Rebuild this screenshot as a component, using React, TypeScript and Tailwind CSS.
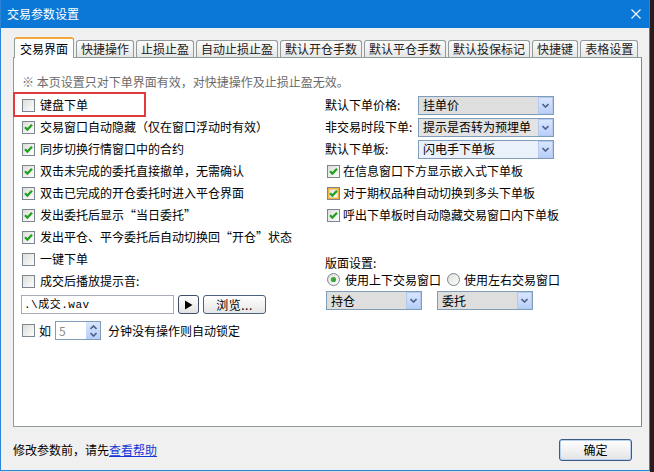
import React from 'react';

function CheckBox({ checked = false, hot = false }: { checked?: boolean; hot?: boolean }) {
  return (
    <svg width="13" height="13" viewBox="0 0 13 13" className="shrink-0">
      <defs>
        <linearGradient id="cb-fill" x1="0" y1="0" x2="1" y2="1">
          <stop offset="0" stopColor="#dcdcd7" />
          <stop offset="1" stopColor="#ffffff" />
        </linearGradient>
      </defs>
      <rect x="0.5" y="0.5" width="12" height="12" fill="url(#cb-fill)" stroke="#7b8691" />
      {hot && <rect x="1.75" y="1.75" width="9.5" height="9.5" fill="none" stroke="#f5b43c" strokeWidth="1.5" />}
      {checked && <path d="M3 6.2 L5.4 8.6 L10 3.8" fill="none" stroke="#21a121" strokeWidth="2.2" />}
    </svg>
  );
}

function Radio({ on = false }: { on?: boolean }) {
  return (
    <svg width="13" height="13" viewBox="0 0 13 13" className="shrink-0">
      <defs>
        <linearGradient id="rb-fill" x1="0" y1="0" x2="1" y2="1">
          <stop offset="0" stopColor="#dcdcd7" />
          <stop offset="1" stopColor="#ffffff" />
        </linearGradient>
      </defs>
      <circle cx="6.5" cy="6.5" r="6" fill="url(#rb-fill)" stroke="#7b8691" />
      {on && <circle cx="6.5" cy="6.5" r="2.6" fill="#3aa53a" />}
    </svg>
  );
}

function Chevron({ up = false }: { up?: boolean }) {
  return (
    <svg width="7" height="5" viewBox="0 0 7 5">
      <path d={up ? 'M0.5 4 L3.5 1 L6.5 4' : 'M0.5 1 L3.5 4 L6.5 1'} fill="none" stroke="#4d6185" strokeWidth="1.6" />
    </svg>
  );
}

function Combo({ text, width, fill }: { text: string; width: string; fill: string }) {
  return (
    <div className={`flex h-[19px] border border-[#7f9db9] bg-white ${width}`}>
      <div className={`flex flex-1 items-center overflow-hidden whitespace-nowrap pl-[4px] ${fill}`}>{text}</div>
      <div className="flex w-[15px] items-center justify-center border border-[#b4c8f0] bg-gradient-to-b from-[#d9e5fd] to-[#b9cffa]">
        <Chevron />
      </div>
    </div>
  );
}

function Check({ label, checked = false, hot = false, gap = 'gap-[5px]' }: { label: string; checked?: boolean; hot?: boolean; gap?: string }) {
  return (
    <div className={`flex h-[22px] items-center ${gap}`}>
      <CheckBox checked={checked} hot={hot} />
      <span className="whitespace-nowrap">{label}</span>
    </div>
  );
}

const tabs = ['交易界面', '快捷操作', '止损止盈', '自动止损止盈', '默认开仓手数', '默认平仓手数', '默认投保标记', '快捷键', '表格设置'];

export default function App() {
  return (
    <div className="flex h-[472px] w-[654px] bg-[#d8d8d8] font-[family-name:'Noto_Sans_CJK_SC','Noto_Sans',sans-serif] text-[12px] leading-[16px] text-black">
      <div className="flex h-[471px] w-[650px] flex-col border-x border-b border-[#2c84d6] bg-[#f0f0f0]">
        {/* 标题栏 */}
        <div className="flex h-[28px] items-center justify-between bg-[#0b78d7] pl-[6px] pr-[8px] text-white">
          <span>交易参数设置</span>
          <svg width="10" height="10" viewBox="0 0 10 10">
            <path d="M0.5 0.5 L9.5 9.5 M9.5 0.5 L0.5 9.5" stroke="#ffffff" strokeWidth="1.1" />
          </svg>
        </div>

        <div className="flex flex-col pl-[12px] pr-[7px] pt-[9px]">
          {/* 选项卡 */}
          <div className="flex h-[20px] items-end gap-[2px] pl-[1px]">
            {tabs.map((t, i) =>
              i === 0 ? (
                <div
                  key={t}
                  className="relative z-10 -mb-px flex h-[21px] items-center rounded-t-[3px] border-x border-t-2 border-x-[#919b9c] border-t-[#f0a83a] bg-white px-[5px] leading-[14px]"
                >
                  {t}
                </div>
              ) : (
                <div
                  key={t}
                  className="flex h-[17px] items-center rounded-t-[3px] border-x border-t border-[#919b9c] bg-gradient-to-b from-[#fcfcfc] to-[#e6e6e6] px-[4px] leading-[14px] text-[#222]"
                >
                  {t}
                </div>
              )
            )}
          </div>

          {/* 面板 */}
          <div className="relative h-[370px] border border-[#919b9c] border-r-[#7f8586] bg-white pl-[8px] pt-[16px]">
            <div className="h-[16px] whitespace-nowrap text-[#6b6b6b]">※ 本页设置只对下单界面有效，对快捷操作及止损止盈无效。</div>

            <div className="mt-[4px] flex">
              <div className="flex w-[303px] flex-col">
                <Check label="键盘下单" />
                <Check label="交易窗口自动隐藏（仅在窗口浮动时有效）" checked />
                <Check label="同步切换行情窗口中的合约" checked />
                <Check label="双击未完成的委托直接撤单，无需确认" checked />
                <Check label="双击已完成的开仓委托时进入平仓界面" checked />
                <Check label="发出委托后显示“当日委托”" checked />
                <Check label="发出平仓、平今委托后自动切换回“开仓”状态" checked />
                <Check label="一键下单" />
                <Check label="成交后播放提示音:" />

                <div className="-ml-px mt-[3px] flex h-[19px] items-stretch">
                  <div className="flex w-[153px] items-center border border-[#a5acb5] bg-white pl-[2px] font-[family-name:'Liberation_Mono','Noto_Sans_CJK_SC',monospace] text-[11px] tracking-[0.5px]">
                    .\成交.wav
                  </div>
                  <div className="ml-[4px] flex w-[21px] items-center justify-center rounded-[3px] border border-[#3c4f6b] bg-gradient-to-b from-[#ffffff] to-[#e3e3e3]">
                    <svg width="9" height="10" viewBox="0 0 9 10">
                      <path d="M1 0.5 L8.5 5 L1 9.5 Z" fill="#000" />
                    </svg>
                  </div>
                  <div className="ml-[4px] flex w-[63px] items-center justify-center rounded-[3px] border border-[#4b5f7e] bg-gradient-to-b from-[#ffffff] to-[#e6e6e6] tracking-[0.5px]">
                    浏览...
                  </div>
                </div>

                <div className="mt-[7px] flex h-[19px] items-center">
                  <CheckBox />
                  <span className="ml-[4px]">如</span>
                  <div className="ml-[4px] flex h-[19px] w-[46px] border border-[#7f9db9] bg-white">
                    <div className="flex flex-1 items-center pl-[3px] text-[#8a8a8a]">5</div>
                    <div className="flex w-[14px] flex-col items-center justify-center gap-[2px] bg-gradient-to-b from-[#d9e5fd] to-[#b9cffa]">
                      <Chevron up />
                      <Chevron />
                    </div>
                  </div>
                  <span className="ml-[7px]">分钟没有操作则自动锁定</span>
                </div>
              </div>

              <div className="flex flex-col">
                <div className="flex h-[22px] items-center">
                  <span className="w-[93px] whitespace-nowrap">默认下单价格:</span>
                  <Combo text="挂单价" width="w-[136px]" fill="bg-[#dedede]" />
                </div>
                <div className="flex h-[22px] items-center">
                  <span className="w-[93px] whitespace-nowrap">非交易时段下单:</span>
                  <Combo text="提示是否转为预埋单" width="w-[136px]" fill="bg-[#e3e3e3]" />
                </div>
                <div className="flex h-[22px] items-center">
                  <span className="w-[93px] whitespace-nowrap">默认下单板:</span>
                  <Combo text="闪电手下单板" width="w-[136px]" fill="bg-[#ebf1fa]" />
                </div>
                <div className="pl-[2px]">
                  <Check label="在信息窗口下方显示嵌入式下单板" checked gap="gap-[3px]" />
                  <Check label="对于期权品种自动切换到多头下单板" checked hot gap="gap-[3px]" />
                  <Check label="呼出下单板时自动隐藏交易窗口内下单板" checked gap="gap-[3px]" />
                </div>

                <div className="mt-[29px] h-[16px]">版面设置:</div>
                <div className="flex h-[17px] items-center pl-[2px]">
                  <Radio on />
                  <span className="ml-[5px]">使用上下交易窗口</span>
                  <span className="ml-[6px]">
                    <Radio />
                  </span>
                  <span className="ml-[4px]">使用左右交易窗口</span>
                </div>
                <div className="mt-[3px] flex gap-[15px] pl-[1px]">
                  <Combo text="持仓" width="w-[96px]" fill="bg-[#dedede]" />
                  <Combo text="委托" width="w-[96px]" fill="bg-[#dedede]" />
                </div>
              </div>
            </div>

            {/* 标注框 */}
            <div className="absolute left-[-1px] top-[34px] h-[25px] w-[133px] border-2 border-[#e23b3b]" />
          </div>

          {/* 底部 */}
          <div className="flex h-[43px] items-center justify-between pt-[3px]">
            <div>
              修改参数前，请先<span className="text-[#1237d6] underline">查看帮助</span>
            </div>
            <div className="mr-[10px] flex h-[22px] w-[73px] items-center justify-center rounded-[3px] border border-[#3b5a84] bg-gradient-to-b from-[#ffffff] to-[#e4e4e4] shadow-[inset_0_0_0_1px_#b7d0f0]">
              确定
            </div>
          </div>
        </div>
      </div>
      <div className="flex-1 bg-[#2a1c1c]" />
    </div>
  );
}
